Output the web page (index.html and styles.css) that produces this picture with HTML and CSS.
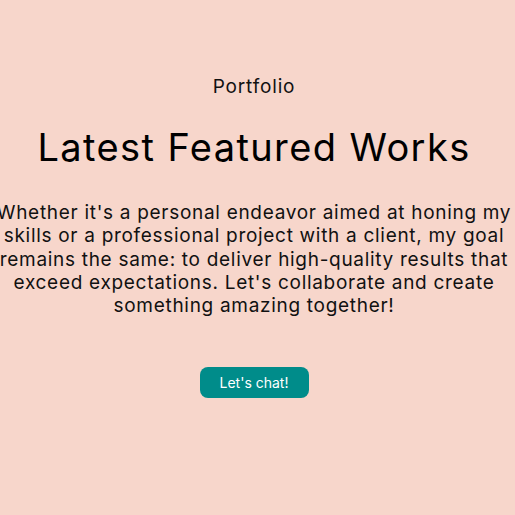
FILE: index.html
```html
<!DOCTYPE html>
<html lang="en">
<head>
<meta charset="utf-8">
<title>Portfolio</title>
<link rel="stylesheet" href="styles.css">
</head>
<body>
<section class="hero">
  <p class="eyebrow">Portfolio</p>
  <h1 class="title">Latest Featured Works</h1>
  <p class="lead">Whether it's a personal endeavor aimed at honing my<br>skills or a professional project with a client, my goal<br>remains the same: to deliver high-quality results that<br>exceed expectations. Let's collaborate and create<br>something amazing together!</p>
  <a class="cta" href="#">Let's chat!</a>
</section>
</body>
</html>
```
FILE: styles.css
```css
html, body {
  margin: 0;
  padding: 0;
  background: #f7d6cb;
  height: 100%;
}
body {
  font-family: Inter, "Noto Sans", sans-serif;
  color: #111;
  overflow: hidden;
}
.hero {
  display: flex;
  flex-direction: column;
  align-items: center;
  padding: 75px 7px 0 0;
  text-align: center;
}
.eyebrow {
  margin: 0;
  font-size: 19px;
  line-height: 24px;
  font-weight: 400;
  letter-spacing: 0.85px;
}
.title {
  margin: 25px 0 0;
  font-size: 38px;
  line-height: 46px;
  font-weight: 400;
  letter-spacing: 1.4px;
  color: #000;
}
.lead {
  margin: 31px -40px 0;
  font-size: 19px;
  line-height: 23.3px;
  font-weight: 400;
  letter-spacing: 0.7px;
  white-space: nowrap;
}
.cta {
  margin-top: 50px;
  display: inline-block;
  background: #008c8a;
  color: #fff;
  text-decoration: none;
  font-size: 14px;
  line-height: 31px;
  height: 31px;
  width: 109px;
  border-radius: 8px;
}
```
